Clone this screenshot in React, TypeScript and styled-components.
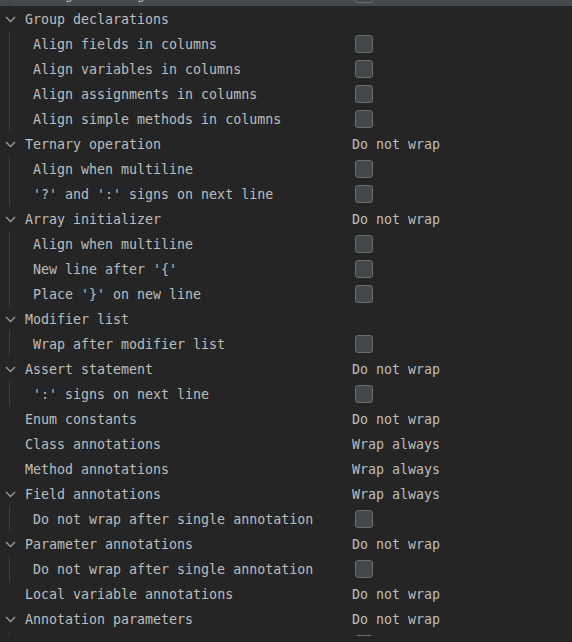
import styled, { createGlobalStyle } from "styled-components";

type Child = { label: string; selected?: boolean };
type Group = { title: string; value?: string; children?: Child[] };

const GlobalStyle = createGlobalStyle`
  html, body {
    margin: 0;
    padding: 0;
    background: #252525;
  }
  body {
    overflow: hidden;
  }
`;

const Panel = styled.div`
  width: 572px;
  height: 642px;
  overflow: hidden;
  background: #252525;
  color: #bdbdbd;
  font-family: "DejaVu Sans Mono", "Liberation Mono", monospace;
  font-size: 13.3px;
`;

// the tree's scroll viewport ends a few pixels above the window edge
const Viewport = styled.div`
  height: 636px;
  overflow: hidden;
`;

const List = styled.div`
  margin-top: -69px;
  display: flex;
  flex-direction: column;
`;

const Row = styled.div<{ $child?: boolean; $selected?: boolean }>`
  height: 25px;
  display: grid;
  grid-template-columns: ${(p) => (p.$child ? "33px 319px 1fr" : "25px 327px 1fr")};
  align-items: center;
  background: ${(p) => (p.$selected ? "#464a4d" : "transparent")};
`;

const Toggle = styled.div`
  height: 100%;
  display: flex;
  align-items: center;
  padding-left: 5px;
  padding-top: 1px;
  box-sizing: border-box;
`;

const Indent = styled.div`
  height: 100%;
  background: linear-gradient(
    to right,
    transparent 9px,
    #3e3e3e 9px,
    #3e3e3e 10px,
    transparent 10px
  );
`;

const Label = styled.span`
  white-space: nowrap;
  line-height: 23px;
  padding-top: 2px;
`;

const Value = styled.span`
  white-space: nowrap;
  line-height: 23px;
  padding-top: 2px;
`;

const Checkbox = styled.span`
  display: block;
  box-sizing: border-box;
  width: 18px;
  height: 18px;
  margin-left: 3px;
  border: 1px solid #6b6e70;
  border-radius: 3px;
  background: #43484b;
`;

const Chevron = () => (
  <svg width="11" height="7" viewBox="0 0 11 7">
    <polyline points="1,1 5.5,5.5 10,1" fill="none" stroke="#9b9b9b" strokeWidth="1.3" />
  </svg>
);

const groups: Group[] = [
  {
    title: "Assignment statement",
    value: "Do not wrap",
    children: [
      { label: "Align when multiline" },
      { label: "Assignment sign on next line", selected: true },
    ],
  },
  {
    title: "Group declarations",
    children: [
      { label: "Align fields in columns" },
      { label: "Align variables in columns" },
      { label: "Align assignments in columns" },
      { label: "Align simple methods in columns" },
    ],
  },
  {
    title: "Ternary operation",
    value: "Do not wrap",
    children: [{ label: "Align when multiline" }, { label: "'?' and ':' signs on next line" }],
  },
  {
    title: "Array initializer",
    value: "Do not wrap",
    children: [
      { label: "Align when multiline" },
      { label: "New line after '{'" },
      { label: "Place '}' on new line" },
    ],
  },
  { title: "Modifier list", children: [{ label: "Wrap after modifier list" }] },
  { title: "Assert statement", value: "Do not wrap", children: [{ label: "':' signs on next line" }] },
  { title: "Enum constants", value: "Do not wrap" },
  { title: "Class annotations", value: "Wrap always" },
  { title: "Method annotations", value: "Wrap always" },
  {
    title: "Field annotations",
    value: "Wrap always",
    children: [{ label: "Do not wrap after single annotation" }],
  },
  {
    title: "Parameter annotations",
    value: "Do not wrap",
    children: [{ label: "Do not wrap after single annotation" }],
  },
  { title: "Local variable annotations", value: "Do not wrap" },
  {
    title: "Annotation parameters",
    value: "Do not wrap",
    children: [
      { label: "Align when multiline" },
      { label: "New line after '('" },
      { label: "Place ')' on new line" },
    ],
  },
];

export default function App() {
  return (
    <>
      <GlobalStyle />
      <Panel>
        <Viewport>
          <List>
            {groups.map((g) => (
              <div key={g.title}>
                <Row>
                  <Toggle>{g.children && <Chevron />}</Toggle>
                  <Label>{g.title}</Label>
                  <Value>{g.value}</Value>
                </Row>
                {g.children?.map((c) => (
                  <Row $child $selected={c.selected} key={c.label}>
                    <Indent />
                    <Label>{c.label}</Label>
                    <Checkbox />
                  </Row>
                ))}
              </div>
            ))}
          </List>
        </Viewport>
      </Panel>
    </>
  );
}
